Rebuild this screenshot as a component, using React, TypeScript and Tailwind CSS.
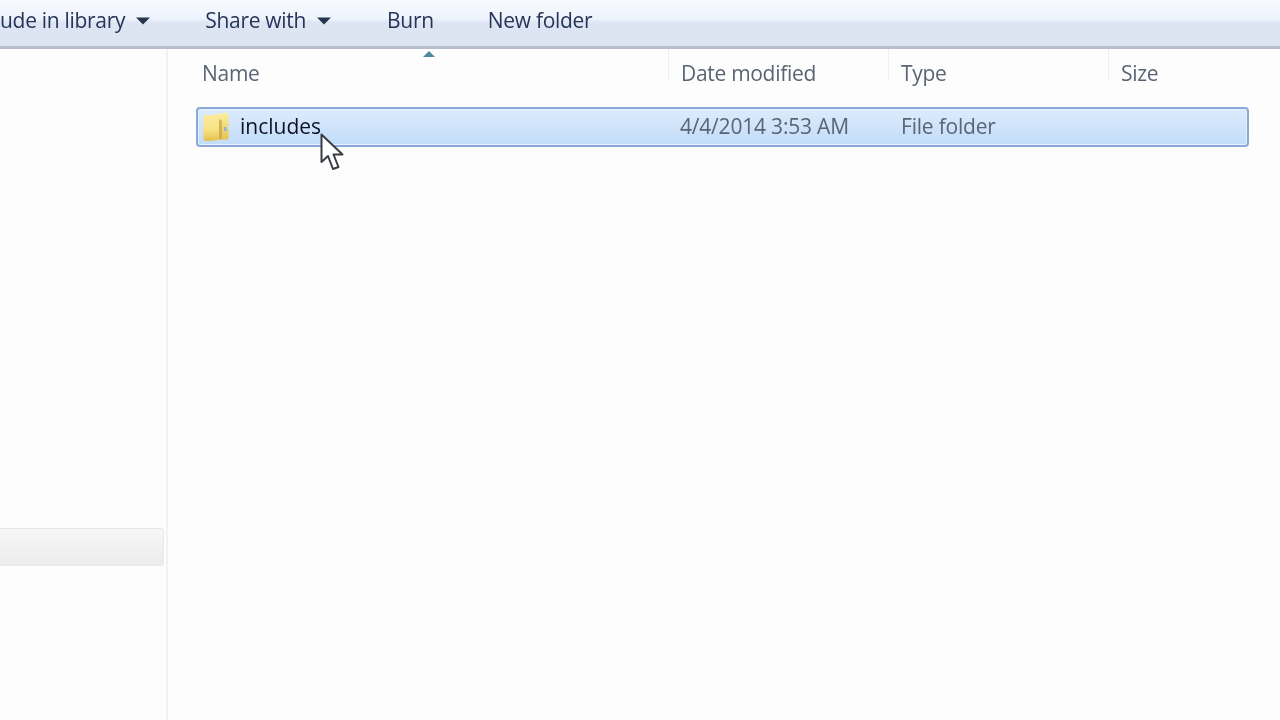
const font = "font-['Open_Sans',sans-serif]"

const Caret = () => (
  <svg width="14" height="8" viewBox="0 0 14 8" className="ml-[11px] mt-[1px]">
    <path d="M0 0.5H14L7 7.5Z" fill="#26344f" />
  </svg>
)

const FolderIcon = () => (
  <svg width="26" height="30" viewBox="0 0 26 30" className="shrink-0">
    <defs>
      <linearGradient id="folderBack" x1="0" y1="0" x2="0" y2="1">
        <stop offset="0" stopColor="#fdf0a0" />
        <stop offset="1" stopColor="#e6c24e" />
      </linearGradient>
      <linearGradient id="folderFront" x1="0" y1="0" x2="0" y2="1">
        <stop offset="0" stopColor="#fbeb9c" />
        <stop offset="0.55" stopColor="#f8e384" />
        <stop offset="1" stopColor="#e5c04c" />
      </linearGradient>
    </defs>
    <path d="M13 2L24 1C25 1 25.500 2 25.500 3V25C25.500 27 25 27.500 24 27.500L13 28Z" fill="url(#folderBack)" />
    <path d="M2 3C1 3 0.500 3.500 0.500 5V26C0.500 28 1.500 29 3 29C8 29 12 28.500 16 27.500V7L13 3Z" fill="url(#folderFront)" />
    <path d="M16 7V27.500L19 26V9Z" fill="#c9a94e" opacity="0.8" />
    <rect x="21" y="15" width="2.500" height="4" fill="#8fb4d8" />
  </svg>
)

const Cursor = () => (
  <svg width="24" height="38" viewBox="0 0 24 38" className="absolute left-[320px] top-[133px]">
    <path
      d="M1.500 1.500V29L8 23L13 36L18.500 34L13.500 21.500H22.500Z"
      fill="#ffffff"
      stroke="#3a3d44"
      strokeWidth="2"
      strokeLinejoin="round"
    />
  </svg>
)

const columns = [
  { label: "Date modified", width: "w-[220px]" },
  { label: "Type", width: "w-[220px]" },
  { label: "Size", width: "w-[146px]" },
]

export default function App() {
  return (
    <div className={`relative flex h-[720px] w-[1280px] flex-col overflow-hidden bg-[#fdfdfd] blur-[0.5px] ${font}`}>
      {/* command bar */}
      <div className="flex h-[49px] shrink-0 items-center overflow-hidden border-b-[3px] border-[#b6bdcb] bg-[linear-gradient(#f7fbff_0%,#eef4fc_40%,#dde5f3_50%,#dce4f3_100%)] pb-[5px] text-[21px] tracking-[-0.3px] text-[#27345a]">
        <div className="flex items-center whitespace-nowrap">
          <span>ude in library</span>
          <Caret />
        </div>
        <div className="ml-[55px] flex items-center whitespace-nowrap">
          <span>Share with</span>
          <Caret />
        </div>
        <span className="ml-[56px]">Burn</span>
        <span className="ml-[54px]">New folder</span>
      </div>

      <div className="flex flex-1">
        {/* nav pane */}
        <div className="flex w-[168px] shrink-0 flex-col border-r-2 border-[#f1f2f4] pr-[2px] pt-[479px]">
          <div className="h-[38px] rounded-r-[3px] border border-l-0 border-[#e9e9e9] bg-[linear-gradient(#f7f7f7,#ececec)]" />
        </div>

        {/* file list */}
        <div className="relative flex-1 pl-[28px] pr-[32px]">
          <span className="absolute left-[255px] top-[2px] h-0 w-0 border-x-[6px] border-b-[6px] border-x-transparent border-b-[#4f8a9c]" />
          <div className="flex h-[48px] text-[21px] tracking-[-0.3px] text-[#5a6474]">
            <div className="flex w-[472px] items-center pl-[6px] pt-[2px]">Name</div>
            {columns.map((col) => (
              <div
                key={col.label}
                className={`mb-[17px] flex ${col.width} items-start border-l border-[#eeeeee] pl-[12px] pt-[9px]`}
              >
                {col.label}
              </div>
            ))}
          </div>

          <div className="mt-[10px] flex h-[40px] w-[1053px] items-center rounded-[4px] border-2 border-[#8aa8d8] bg-[linear-gradient(#dcebfc,#c2dcf9)] text-[21px] tracking-[-0.2px] shadow-[inset_0_0_0_1px_#e6f0fd]">
            <div className="flex w-[471px] items-center pl-[5px]">
              <FolderIcon />
              <span className="ml-[11px] tracking-[0px] text-[#0f1222]">includes</span>
            </div>
            <span className="w-[220px] pl-[11px] whitespace-nowrap text-[#5a6474]">4/4/2014 3:53 AM</span>
            <span className="pl-[12px] whitespace-nowrap text-[#5a6474]">File folder</span>
          </div>
        </div>
      </div>

      <Cursor />
    </div>
  )
}
